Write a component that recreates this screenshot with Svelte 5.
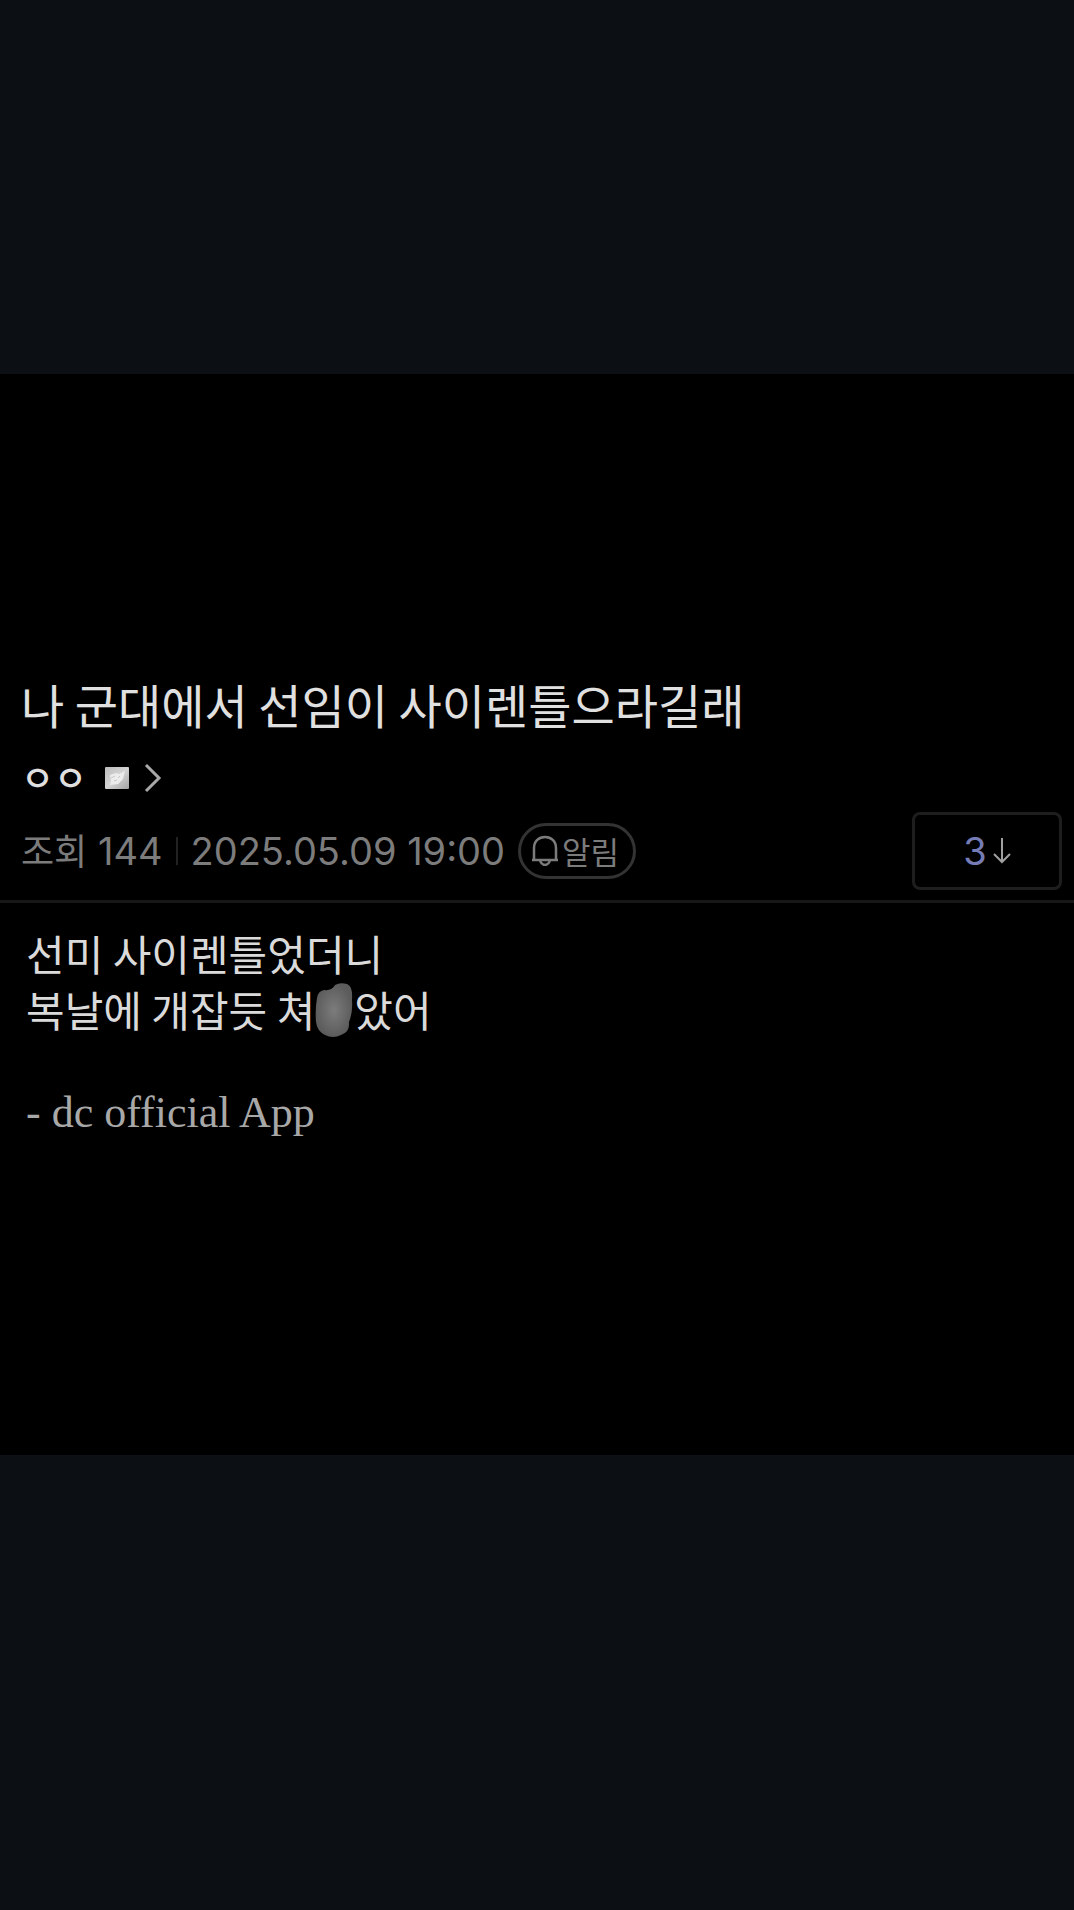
<script lang="ts">
	const post = {
		title: '나 군대에서 선임이 사이렌틀으라길래',
		author: 'ㅇㅇ',
		views: 144,
		date: '2025.05.09 19:00',
		comments: 3,
	};
</script>

<main class="viewer">
	<article class="post">
		<header class="post-header">
			<h1>{post.title}</h1>

			<a class="author" href="#author">
				<span>{post.author}</span>
				<svg class="author-icon" width="24" height="22" viewBox="0 0 24 22" aria-hidden="true">
					<defs>
						<linearGradient id="tile" x1="0" y1="0" x2="1" y2="1">
							<stop offset="0" stop-color="#bcbcbc" />
							<stop offset="0.5" stop-color="#d4d4d4" />
							<stop offset="1" stop-color="#a2a2a2" />
						</linearGradient>
					</defs>
					<rect width="24" height="22" rx="1" fill="url(#tile)" />
					<path d="M5 8l6-2 3 1 6-3-2 8-5 5-8 1 1-4z" fill="#ececec" />
					<path d="M6 11l4-2M13 11l2-2M9 14l3-1" stroke="#c8c8c8" stroke-width="1" fill="none" />
				</svg>
				<svg class="chevron" width="18" height="30" viewBox="0 0 18 30" fill="none" stroke="#a8a8a8" stroke-width="3" aria-hidden="true">
					<polyline points="2 2 15 15 2 28" />
				</svg>
			</a>

			<div class="meta">
				<span><span class="label">조회</span> {post.views}</span>
				<span class="divider"></span>
				<time datetime="2025-05-09T19:00">{post.date}</time>
				<button class="alarm">
					<svg width="28" height="32" viewBox="0 0 28 32" fill="none" stroke="currentColor" stroke-width="2.5" aria-hidden="true">
						<path d="M3 26V14C3 7 8 3 14 3s11 4 11 11v12" />
						<path d="M1 26h26" />
						<path d="M9 27q2 4 5 4t5-4" />
					</svg>
					<span>알림</span>
				</button>
				<button class="comments">
					<span>{post.comments}</span>
					<svg width="18" height="27" viewBox="0 0 18 27" fill="none" stroke="#a0a0a0" stroke-width="2" aria-hidden="true">
						<path d="M9 0v24M1 16l8 8 8-8" />
					</svg>
				</button>
			</div>
		</header>

		<div class="post-body">
			<p>
				선미 사이렌틀었더니<br />
				복날에 개잡듯 쳐<span class="smudge"><svg width="38" height="56" viewBox="0 0 38 56" aria-hidden="true">
					<defs>
						<radialGradient id="smear">
							<stop offset="0" stop-color="#7c7c7c" />
							<stop offset="1" stop-color="#5c5c5c" />
						</radialGradient>
					</defs>
					<path d="M2 16Q3 9 9 8Q17 9 20 3Q25 0 32 2Q38 4 37 18Q38 30 34 40Q35 50 26 53Q18 57 10 53Q2 49 1 40Q0 28 2 16z" fill="url(#smear)" />
				</svg></span>았어
			</p>
			<p class="signature">- dc official App</p>
		</div>
	</article>
</main>

<style>
	:global(body) {
		margin: 0;
		background: #0c1014;
	}

	.viewer {
		padding: 374px 0 456px;
		font-family: Inter, 'Noto Sans CJK KR', sans-serif;
	}

	.post {
		padding: 294px 0 314px;
		background: #000;
	}

	.post-header {
		padding: 0 12px 10px 21px;
		border-bottom: 3px solid #171717;
	}

	h1 {
		margin: 0;
		font-family: 'Noto Sans CJK KR', sans-serif;
		font-size: 47px;
		font-weight: 400;
		line-height: 72px;
		color: #e0e0e0;
	}

	.author {
		display: flex;
		align-items: center;
		width: fit-content;
		height: 72px;
		font-size: 36px;
		font-weight: 500;
		color: #e0e0e0;
		text-decoration: none;
	}

	.author svg {
		margin-top: 3px;
	}

	.author-icon {
		margin-left: 18px;
	}

	.chevron {
		margin-left: 15px;
	}

	.meta {
		display: flex;
		align-items: center;
		font-size: 38px;
		line-height: 48px;
		color: #7c7c7c;
	}

	.label {
		font-size: 36px;
	}

	.divider {
		width: 2px;
		height: 28px;
		margin: 0 13px;
		background: #222;
	}

	button {
		display: flex;
		align-items: center;
		justify-content: center;
		box-sizing: border-box;
		padding: 0;
		background: none;
		font-family: inherit;
		color: inherit;
		cursor: pointer;
	}

	.alarm {
		gap: 3px;
		height: 56px;
		margin-left: 13px;
		padding: 0 14px 2px 10px;
		border: 3px solid #333;
		border-radius: 28px;
		font-family: 'Noto Sans CJK KR', sans-serif;
		font-size: 31px;
	}

	.comments {
		gap: 6px;
		width: 150px;
		height: 78px;
		margin-left: auto;
		border: 3px solid #1e1e1e;
		border-radius: 8px;
		font-size: 38px;
		color: #767cb6;
	}

	.post-body {
		padding: 22px 26px 0;
		font-family: 'Noto Sans CJK KR', sans-serif;
		font-size: 42px;
		line-height: 56px;
		color: #dadada;
	}

	p {
		margin: 0;
	}

	.smudge {
		display: inline-block;
		position: relative;
		width: 39px;
		height: 28px;
	}

	.smudge svg {
		position: absolute;
		left: 0;
		bottom: -11px;
	}

	.signature {
		margin-top: 48px;
		font-family: 'Liberation Serif', serif;
		font-size: 44px;
		color: #a8a8a8;
	}
</style>
